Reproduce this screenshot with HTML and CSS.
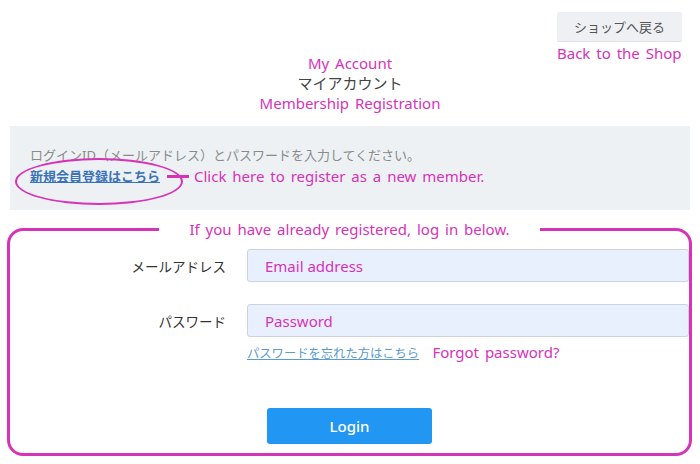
FILE: index.html
```html
<!DOCTYPE html>
<html lang="ja">
<head>
  <meta charset="UTF-8" />
  <meta name="viewport" content="width=device-width, initial-scale=1.0" />
  <title>マイアカウント</title>
  <link rel="stylesheet" href="styles.css">
</head>
<body>
  <div class="page">
    <div class="top">
      <div class="shop">
        <button class="shop-btn" type="button">ショップへ戻る</button>
        <span class="note shop-note">Back to the Shop</span>
      </div>
    </div>

    <div class="title">
      <span class="note">My Account</span>
      <h1>マイアカウント</h1>
      <span class="note">Membership Registration</span>
    </div>

    <div class="intro">
      <p>ログインID（メールアドレス）とパスワードを入力してください。</p>
      <div class="register">
        <a class="register-link" href="#">新規会員登録はこちら<span class="circle"></span></a>
        <span class="pointer"></span>
        <span class="note">Click here to register as a new member.</span>
      </div>
    </div>

    <form class="login-form" onsubmit="return false;">
      <fieldset class="login-box">
        <legend class="note">If you have already registered, log in below.</legend>

        <div class="row">
          <label for="email">メールアドレス</label>
          <input type="email" id="email" placeholder="Email address" />
        </div>

        <div class="row">
          <label for="password">パスワード</label>
          <input type="password" id="password" placeholder="Password" />
        </div>

        <div class="forgot">
          <a href="#">パスワードを忘れた方はこちら</a>
          <span class="note">Forgot password?</span>
        </div>

        <div class="actions">
          <button class="login-btn" type="submit">Login</button>
        </div>
      </fieldset>
    </form>
  </div>
</body>
</html>
```

FILE: styles.css
```css
body {
  margin: 0;
  font-family: "Noto Sans", "Noto Sans CJK JP", sans-serif;
  color: #333;
  background: #fff;
}
.page {
  padding: 0 10px;
}
.note {
  color: #d633b9;
  font-size: 15px;
  word-spacing: 2px;
}

/* 上部 */
.top {
  display: flex;
  justify-content: flex-end;
  padding-top: 12px;
  padding-right: 8px;
}
.shop {
  position: relative;
}
.shop-btn {
  width: 125px;
  height: 30px;
  font-family: "Noto Sans CJK JP", sans-serif;
  font-size: 13px;
  color: #555;
  background: #eef0f3;
  border: none;
  border-bottom: 1px solid #dde0e4;
  border-radius: 2px;
}
.shop-note {
  position: absolute;
  left: 0;
  top: 31px;
  white-space: nowrap;
}

.title {
  margin-top: 11px;
  text-align: center;
  line-height: 20px;
}
.title .note {
  display: block;
}
.title h1 {
  margin: 0;
  font-size: 15px;
  font-weight: normal;
  color: #444;
}

/* 説明 */
.intro {
  margin-top: 13px;
  background: #eef1f4;
  padding: 19px 20px 23px;
  font-size: 13px;
  line-height: 21px;
}
.intro p {
  margin: 0;
  color: #8a8a8a;
}
.register {
  display: flex;
  align-items: center;
}
.register-link {
  position: relative;
  color: #3b73b8;
  font-weight: bold;
}
.circle {
  position: absolute;
  left: -15px;
  top: -8px;
  width: 164px;
  height: 43px;
  border: 2.5px solid #d633b9;
  border-radius: 50%;
}
.pointer {
  width: 22px;
  height: 3px;
  margin: 0 5px 0 7px;
  background: #d633b9;
}

/* ログイン */
.login-form {
  margin: 9px -2px 0 -3px;
}
.login-box {
  margin: 0;
  padding: 10px 0 9px;
  border: 3px solid #d633b9;
  border-radius: 16px;
}
.login-box legend {
  margin: 0 auto;
  padding: 0 30px;
  line-height: 20px;
}
.row {
  display: grid;
  grid-template-columns: 216px 1fr;
  column-gap: 21px;
  align-items: center;
  margin-bottom: 22px;
}
.row label {
  text-align: right;
  font-size: 13.5px;
  color: #333;
}
.row input {
  height: 33px;
  box-sizing: border-box;
  padding: 0 17px;
  background: #e8f0fe;
  border: 1px solid #ccd3dc;
  border-radius: 3px;
  font-size: 15px;
  font-family: "Noto Sans", sans-serif;
}
.row input::placeholder {
  color: #d633b9;
}
.forgot {
  margin-top: -17px;
  margin-left: 237px;
  font-size: 12.3px;
  line-height: 20px;
}
.forgot a {
  color: #5b9bd5;
  margin-right: 10px;
}
.actions {
  margin-top: 44px;
  text-align: center;
}
.login-btn {
  width: 165px;
  height: 36px;
  background: #2196f3;
  color: #fff;
  border: none;
  border-radius: 3px;
  font-family: "Noto Sans", sans-serif;
  font-size: 15px;
  font-weight: 500;
}
```
